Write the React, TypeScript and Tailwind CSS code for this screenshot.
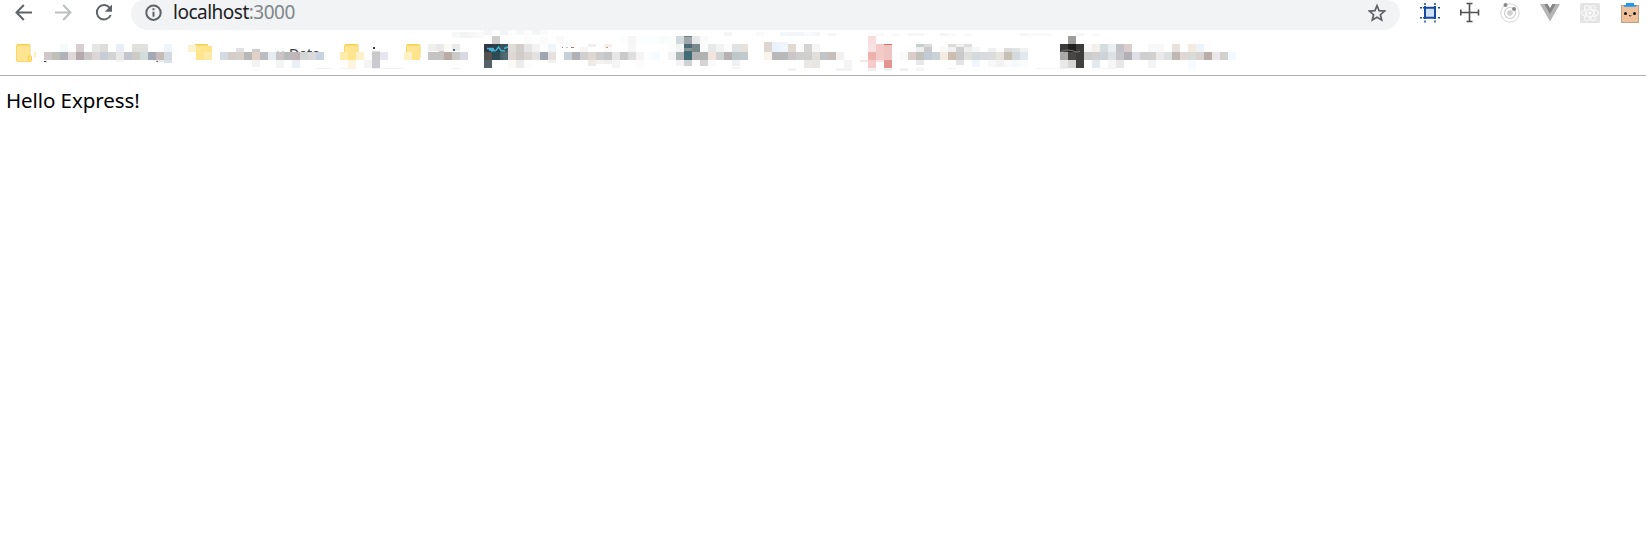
import React from "react";

const CELL = 8;

// A run of horizontally adjacent blocks: [x, y, colours, height?]
type Run = [number, number, string, number?];

function Blocks({ runs }: { runs: Run[] }) {
  return (
    <>
      {runs.map(([x, y, colours, h], i) =>
        colours.split(" ").map((c, j) => (
          <rect key={`${i}-${j}`} x={x + j * CELL} y={y} width={CELL} height={h ?? CELL} fill={`#${c}`} />
        )),
      )}
    </>
  );
}

type BookmarkData = { x: number; width: number; runs: Run[]; art?: React.ReactNode; overlay?: React.ReactNode };

function Bookmark({ x, width, runs, art, overlay }: BookmarkData) {
  return (
    <svg className="block shrink-0" width={width} height={45} viewBox={`${x} 30 ${width} 45`} shapeRendering="crispEdges">
      {art}
      <Blocks runs={runs} />
      {overlay}
    </svg>
  );
}

function Folder({ x, h = 17 }: { x: number; h?: number }) {
  return (
    <g shapeRendering="auto">
      <rect x={x + 0.5} y={44.5} width={13.5} height={h} rx={1.5} fill="#ffe592" stroke="#f8d866" />
      <rect x={x + 1} y={44} width={12.5} height={1.6} fill="#f6d352" />
    </g>
  );
}

const bookmarks: BookmarkData[] = [
  {
    x: 0, width: 188,
    art: (
      <>
        <Folder x={16} />
        <rect x={28.5} y={56} width={3} height={5.5} rx={1} fill="#ffe07a" stroke="#f6d352" shapeRendering="auto" />
        <rect x={34} y={52} width={2} height={5} fill="#fdeebd" />
        <rect x={44} y={61} width={2} height={1} fill="#3d2b45" />
        <rect x={46} y={61} width={1} height={1} fill="#a9c4dd" />
      </>
    ),
    runs: [
      [60, 44, "f4f9fc"], [76, 44, "d7cfd1"], [92, 44, "e5e7e5 dedddc"], [116, 44, "e9eef6"], [132, 44, "e0e1dd e0e0df"], [164, 44, "f0f5fa"],
      [44, 52, "d0c8c8 bfbfbc b1b3b8 ded8d9 b6a9ae cbc6c7 dcd6d6 c9ccd3 d2d3d4 e7e7e7 c4c5cd cccbc8 d3dcd9 a3a9b6 c6bcb7 d4d9e1"],
      [116, 60, "f7f3f3", 2], [156, 60, "e3ebf1", 2], [164, 60, "d9e2ec", 3],
    ],
    overlay: (
      <>
        <rect x={156} y={61} width={1} height={1} fill="#b98b62" />
        <rect x={157} y={61} width={1} height={1} fill="#4c5a72" />
      </>
    ),
  },
  {
    x: 188, width: 152,
    art: (
      <>
        <Folder x={194} h={14} />
        <text x={289} y={58.5} fontSize={14} fontFamily="Noto Sans, sans-serif" fill="#3c4043">Data</text>
        <rect x={277} y={51} width={2} height={1} fill="#cfcfcf" />
        <rect x={282} y={51} width={2} height={1} fill="#cfcfcf" />
      </>
    ),
    runs: [
      [188, 45, "fbf1cb", 7], [196, 46, "ffe591 ffe48c", 6], [188, 52, "fffefa ffe48e fdeaa9"],
      [236, 48, "e1e1e1", 4], [252, 49, "cecdcd", 3],
      [220, 52, "d6dae2 d4cecb d5d0c9 b8b8ba dfd3c9 bcbdc1 e6ebef c7c5c6 b9b8bb bdb5b6 d4d5d5 d9dadb c9d2e2"],
      [252, 60, "f3f3f4", 7], [276, 60, "f5f4f4 ffffff ebeff3"],
      [316, 68, "f3f3f3 f4f4f4", 1],
    ],
  },
  {
    x: 340, width: 64,
    art: (
      <>
        <Folder x={344} h={14} />
        <rect x={373} y={47} width={2} height={2} fill="#333b4d" />
      </>
    ),
    runs: [
      [340, 52, "fdecac ffe48e fdf0cd fffefe c9c8cb e6e7ee"],
      [340, 60, "fffefb fff5de ffffff f4f4f4 cacacf"], [372, 51, "dddddd", 1],
      [340, 68, "f3f3f3 f3f3f3 ffffff ffffff f3f3f3 f3f3f3 f3f3f3 f3f3f3", 1],
    ],
  },
  {
    x: 404, width: 80,
    art: <Folder x={406} h={14} />,
    runs: [
      [404, 52, "fff1c5 ffe48b"], [428, 44, "efefee e8e9e8 fcf8f4 ebebeb", 7],
      [428, 52, "c6c4c2 c5c4c2 b9aca4 c9cac8 d9dae1"],
      [452, 32, "f7f8f8 f3f5f5 f6f6f6 f9f9f9", 6], [452, 68, "f3f3f3", 1],
    ],
    overlay: (
      <>
        <rect x={453} y={49} width={2} height={2} fill="#4c6b92" />
        <rect x={439} y={51} width={5} height={1} fill="#cfcac8" />
      </>
    ),
  },
  {
    x: 484, width: 184,
    runs: [
      [484, 30, "f4f6f6 fbfcfc f2f5f6 fdfdfd f6f7f7 fcfcfc f2f4f6 f9fafa", 5],
      [492, 36, "d0cecd"], [524, 36, "fbfbfb ffffff fbfbfc ffffff fafafa"], [620, 36, "fcfdfd f6f6f6 fcfdfd fbfdff fbfdff fafcfc"],
      [484, 44, "2f3a40 2b4049 36525a", 8], [508, 44, "e0dcd7 d0cdcb e5e5e5 f3f3f2 fdfdfd f1f4f8"],
      [484, 52, "555151 2d4b54 476269 dfd7d3 d0cccc d9d6d3 e3e2df a0a6b1 e6e1de ffffff c7d0d6 b0b0b7 d1cfcf ded8d5 cdcccc c7c6c7 e4e6e7 cacaca dfdede f7f2f3 fbfdff f6fbff"],
      [484, 60, "546268 ffffff ffffff fdf9f5 ececed fcfcfd"], [548, 60, "f2f2f2", 3],
      [588, 44, "efefef", 3], [604, 44, "f8efea", 3], [580, 47, "f8f6f4 ffffff ffffff fafafa", 5], [628, 44, "f7f7f7"],
      [588, 60, "efeae8", 6], [596, 60, "f3f2f1 f1f0ef", 4], [612, 60, "f5f6f6"], [636, 60, "fcfafa"],
    ],
    overlay: (
      <g shapeRendering="auto">
        <path d="M487 48.5h6l1 1.5h-5M491 51l5-.5 2.5-3.5 2.5 3.5 4 .5M504 48.5l4-1.500" fill="none" stroke="#42b4d8" strokeWidth="1.4" />
        <path d="M508 50v10h-4q-5-5 4-10z" fill="#687c80" opacity=".35" />
        <rect x={562} y={47} width={1} height={1} fill="#7b8a94" />
        <rect x={566} y={47} width={2} height={1} fill="#a6c7dd" />
        <rect x={571} y={47} width={3} height={1} fill="#a87954" />
        <rect x={606} y={47} width={2} height={1} fill="#a7a19a" />
      </g>
    ),
  },
  {
    x: 668, width: 192,
    runs: [
      [724, 32, "f6f7f8", 4], [756, 32, "fafafb ffffff ffffff f3f7fa f3f5f7 f3f6f8 fafafa f6f7f8", 4], [828, 33, "f6f7f8", 3],
      [668, 36, "fbfcfc d2d9da a0a6a9 e7e9e9 fafafa"], [684, 36, "71817f", 1],
      [668, 44, "fbfcfc f3f4f4 4c6d78 7c898b fbfbfb e7e8e8 f2f3f3 fcfcfc dee2e3 e6e1dd"], [684, 48, "889397", 3],
      [668, 52, "f2f4f3 b1b6b7 426b79 b1b3b3 b0b3b1 f1e5e1 d0d1d3 b5b0b1 bfc7c9 c3cacd ffffff ffffff f8f3ec b8b8bb b9b9bb cac6c8 cfcecf cfcecd e0dfdb c0c4c4 c4bebd f2f1ee"],
      [676, 60, "f4f4f4 cfd1d2 ffffff d3d4d3 fafafa ffffff ffffff eff2f4", 6],
      [764, 42, "ded5d0 eaf2fb f0f5fc", 10], [788, 44, "dfdad4 fbfbfb d4d4d4 f6f6f6"],
      [804, 60, "eae9e6 e8e7e3", 8], [844, 60, "f4f4f4"], [788, 68, "f3f3f3", 3], [836, 68, "f3f3f3 f3f3f3", 3],
      [732, 67, "f2f3f3", 2],
    ],
  },
  {
    x: 860, width: 200,
    runs: [
      [876, 33, "f7f8f8", 3], [892, 33, "fafafa ffffff f7f7f7 f7f7f7", 3], [940, 33, "f4f5f5 fafafa ffffff f8f8f8", 3],
      [1020, 33, "f5f6f7 fafafa fafafa fafafa", 3],
      [868, 36, "f7dddd"], [868, 44, "f8e3e2 f3cac8 efc4c3"], [884, 44, "d9706d", 1],
      [868, 52, "edb2ad f3cbc8 efc5c3"], [860, 60, "f8e4e3 f4cbc8 f8e1df", 2], [868, 62, "f4cecc", 6], [884, 60, "e3968f"],
      [868, 68, "f1f1f1 ffffff f1f1f1", 3], [900, 68, "f2f2f2 ffffff f4f4f4", 3], [948, 68, "f3f3f3", 1],
      [916, 44, "c9cdcd dcdcdc", 3], [908, 47, "fbfcfb eef0f0 cbcaca ffffff f9f9f9", 5],
      [948, 44, "dddbd8 eeefef dddedd", 3], [948, 47, "f1f1f1 cfcfcf eeeeee f5f6f6", 5], [988, 48, "f0f0f0 fcfcfc dcdddc e1e4e5 eff1f2", 4],
      [900, 52, "fafafa d9cec9 c0c2bb c3cbd7 c9d1d9 f5ecdf cbbdaf c9c9c9 dfdfde d6d9dc dadbdf dadcdd e7e3de c7c1b5 d3d9dd e3e8ec"],
      [916, 60, "e8e8e8", 5], [956, 60, "e4e4e4", 5], [972, 60, "f0f6fb ffffff f8f8f8 f2f2f2 fafafa f6f9fb f9fcfb", 7],
      [1036, 68, "f5f5f5 f5f5f5 f5f5f5", 1],
    ],
  },
  {
    x: 1060, width: 180,
    runs: [
      [1076, 33, "f7f7f7 ffffff fafafa", 3], [1068, 36, "9e9d9b"],
      [1060, 44, "3a3b3a 20201f 3c3d3b f8f8f8 f3efeb d5dde1 e9eff2 c2c2c6 dacfce ffffff ffffff f8f8f8 f8f8f8 ffffff e6e1dd ffffff f5eae0 ecf3fb fdfdfd"],
      [1060, 52, "aaaaa8 484745 3d3d3b ccccca d0d0d2 ced3d8 dde1e3 c6c5c9 b2b0b5 dfe0e6 d0cfcf d1d0d0 ebe8e8 dbdfe1 bfb7b2 dfd8d5 d9dbd6 d8d2d0 b9adaa ebe6e7 d0d0cf f2f9ff"],
      [1060, 60, "e9e9e9 d8d6d4 40403f ffffff e5e9ec ffffff f6f6f6 e7e7e7 ffffff ffffff ffffff f4f4f4 ffffff ffffff ffffff ffffff f6fbff"],
      [1060, 68, "f1f1f1 ffffff ffffff ffffff ffffff f5f5f5 f5f5f5", 1],
    ],
    overlay: <path d="M1061 51.5l6-1.5 5 .5 4 1.5 4-.5" fill="none" stroke="#777" strokeWidth="1" shapeRendering="auto" />,
  },
];

export default function App() {
  return (
    <div className="h-[548px] w-full overflow-hidden bg-white font-['Noto_Sans',sans-serif]">
      <header className="flex h-[30px] items-start">
        <div className="flex w-[131px] shrink-0 pl-[15px]">
          <svg width="17" height="26" viewBox="0 0 17 26" fill="none" stroke="#5f6368" strokeWidth="2">
            <path d="M17 12.5H2M8.8 5 1.5 12.5l7.3 7.5" />
          </svg>
          <svg className="ml-[23px]" width="17" height="26" viewBox="0 0 17 26" fill="none" stroke="#bcbec0" strokeWidth="2">
            <path d="M0 12.5h15M8.2 5l7.3 7.5-7.3 7.5" />
          </svg>
          <svg className="ml-[23px]" width="18" height="26" viewBox="0 0 18 26" fill="none" stroke="#5f6368" strokeWidth="2">
            <path d="M14.8 8A7.2 7.2 0 1 0 15.7 15" />
            <path d="M17 4.5v7.2h-7.2z" fill="#5f6368" stroke="none" />
          </svg>
        </div>
        <div className="flex h-[30px] w-[1269px] shrink-0 items-start rounded-b-[17px] rounded-t-[13px] bg-[#f1f3f4] pl-[14px] pr-[14px]">
          <svg width="17" height="26" viewBox="0 0 17 26" fill="none" stroke="#5f6368" strokeWidth="2">
            <circle cx="8.5" cy="12.7" r="7.2" />
            <path d="M8.5 11.7v5M8.5 8.2v2" />
          </svg>
          <span className="ml-[11px] text-[19px] leading-[25px] tracking-[-0.5px] text-[#202124]">
            localhost<span className="text-[#80868b]">:3000</span>
          </span>
          <svg className="ml-auto" width="18" height="26" viewBox="0 0 18 26" fill="none" stroke="#5f6368" strokeWidth="1.7">
            <path d="m9 5.6 2.1 5 5.5.5-4.2 3.6 1.3 5.3L9 17.2 4.3 20l1.3-5.3L1.4 11.1l5.5-.5z" />
          </svg>
        </div>
        <div className="flex h-[26px] items-center gap-5 pl-5">
          <svg width="20" height="26" viewBox="0 0 20 26" fill="none">
            <path d="M4 7h12v11H4z" fill="#cfe1fb" />
            <path d="M5 6v13M15 6v13M4 7.8h12M4 17.8h12" stroke="#174a9c" strokeWidth="2" />
            <path d="M5 3v2M15 3v2M5 20.5v2M15 20.5v2M0 7.8h2M3 7.8h1M18 7.8h2M0 17.8h2M3 17.8h1M18 17.8h2" stroke="#174a9c" strokeWidth="1.5" />
          </svg>
          <svg width="20" height="26" viewBox="0 0 20 26" fill="none" stroke="#505050" strokeWidth="1.6">
            <path d="M.8 12.5h18M9.5 3.5v18M6.5 3.5h6M6.5 21.5h6M.8 9.5v6M18.5 9.5v6" />
          </svg>
          <svg width="20" height="26" viewBox="0 0 20 26" fill="none">
            <circle cx="10" cy="13" r="9.2" stroke="#d5d5d5" />
            <circle cx="10" cy="13" r="5.5" stroke="#cdcdcd" strokeWidth="1.2" />
            <circle cx="10" cy="13" r="2.8" fill="#cecece" />
            <circle cx="5.5" cy="5" r="2" fill="#888" />
            <circle cx="14" cy="9" r="2" fill="#888" />
          </svg>
          <svg width="20" height="26" viewBox="0 0 20 26">
            <path d="M0 4h4l6 10.5L16 4h4L10 21.5z" fill="#b5b5b5" />
            <path d="M4 4h3.7L10 8l2.3-4H16l-6 10.5z" fill="#868686" />
          </svg>
          <svg width="20" height="26" viewBox="0 0 20 26" fill="none">
            <rect y="3" width="20" height="20" rx="1.5" fill="#e4e4e4" />
            <g stroke="#f8f8f8" strokeWidth="1.6" strokeDasharray="2 .6">
              <ellipse cx="10" cy="13" rx="8.5" ry="3.5" />
              <ellipse cx="10" cy="13" rx="8.5" ry="3.5" transform="rotate(60 10 13)" />
              <ellipse cx="10" cy="13" rx="8.5" ry="3.5" transform="rotate(120 10 13)" />
            </g>
            <circle cx="10" cy="13" r="1.6" fill="#fff" />
          </svg>
          <svg width="20" height="26" viewBox="0 0 20 26">
            <rect x="1.5" y="5.5" width="17" height="17" fill="#ecc19c" stroke="#c5a07e" />
            <path d="M6 3h8v2h2v1.8H4V5h2z" fill="#2196f3" />
            <circle cx="5.5" cy="13.5" r="1.5" fill="#161310" />
            <circle cx="14.5" cy="13.5" r="1.5" fill="#161310" />
            <path d="M9 15.3q1.2 1.5 2.4 0" fill="none" stroke="#30251d" />
          </svg>
        </div>
      </header>
      <nav className="flex h-[46px] border-b border-[#b1b1b1]">
        {bookmarks.map((b) => (
          <Bookmark key={b.x} {...b} />
        ))}
      </nav>
      <main className="pl-[6px] pt-[9px]">
        <p className="text-[20.5px] leading-[30px] tracking-[-0.08px] text-black">Hello Express!</p>
      </main>
    </div>
  );
}
